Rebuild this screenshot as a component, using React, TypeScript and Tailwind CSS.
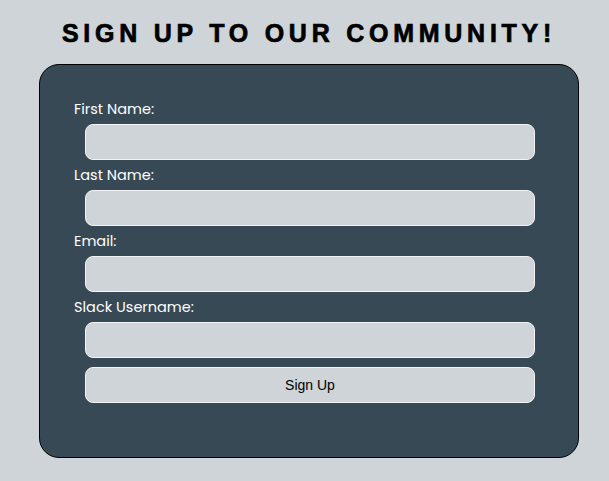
export default function App() {
  const fields = ['First Name:', 'Last Name:', 'Email:', 'Slack Username:'];

  return (
    <div className="min-h-[481px] w-[609px] bg-[#ced4d7] pt-[20px] pl-[39px]">
      <div className="w-[540px]">
        {/* Heading */}
        <h1 className="text-center font-['Liberation_Sans',sans-serif] text-[25px] font-black leading-[26px] tracking-[0.19em] text-black [-webkit-text-stroke:0.7px_black]">
          SIGN UP TO OUR COMMUNITY!
        </h1>

        {/* Form card */}
        <form className="mt-[18px] h-[394px] rounded-[20px] border border-black bg-[#374955] pt-[33px] pl-[34px] font-['Poppins','Lato',sans-serif]">
          {fields.map((label) => (
            <div key={label}>
              <label className="block h-[22px] text-[14.5px] leading-[22px] text-white">{label}</label>
              <input
                type="text"
                className="mt-[4px] mb-[4px] ml-[11px] block h-[36px] w-[450px] rounded-[8px] border border-[#f2f4f5] bg-[#ced4d7] outline-none"
              />
            </div>
          ))}
          <button
            type="button"
            className="mt-[9px] ml-[11px] block h-[36px] w-[450px] rounded-[8px] border border-[#f2f4f5] bg-[#ced4d7] font-['Liberation_Sans',sans-serif] text-[14px] text-black"
          >
            Sign Up
          </button>
        </form>
      </div>
    </div>
  );
}
